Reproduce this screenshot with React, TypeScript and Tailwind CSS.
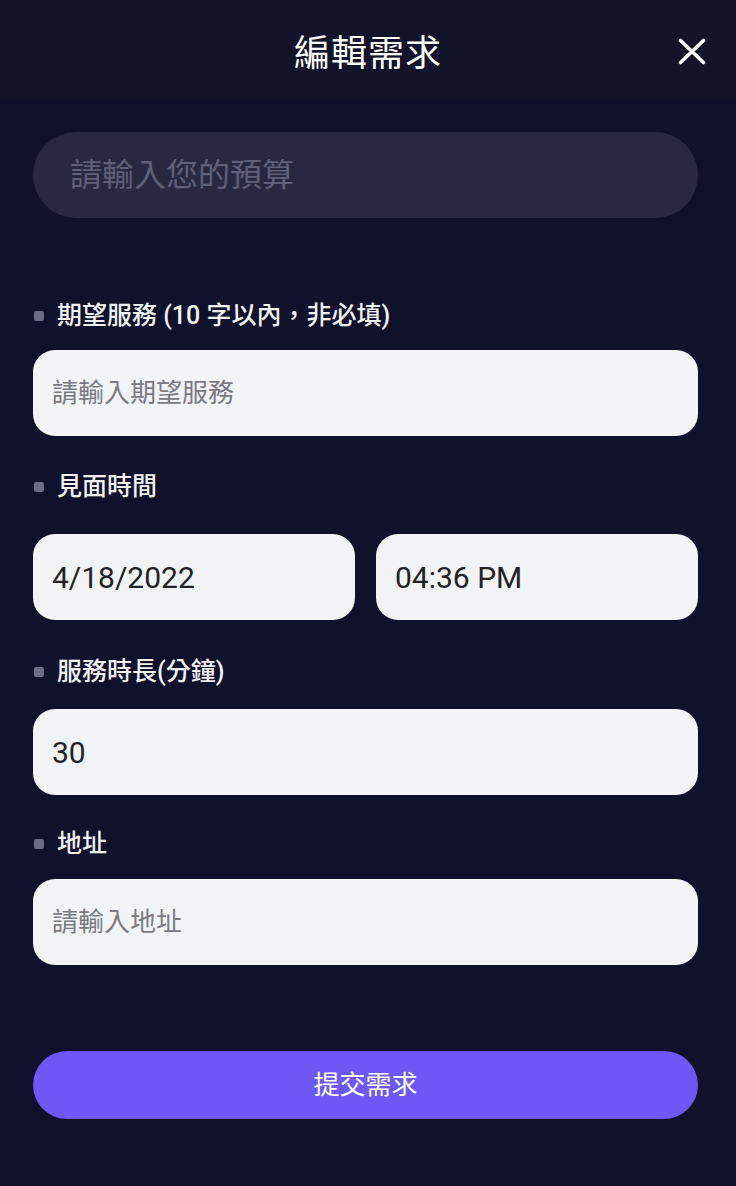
import React from "react";

const cjk = { fontFamily: 'Roboto, "Noto Sans CJK TC", sans-serif' };

function Label({ children, className = "" }: { children: React.ReactNode; className?: string }) {
  return (
    <div className={`flex items-center h-[34px] ${className}`}>
      <span className="w-[10px] h-[10px] rounded-[2px] bg-[#6b6d85] mr-[13px] ml-[1px]" />
      <span className="text-[25px] font-medium text-[#f1f1f4] leading-[34px]">{children}</span>
    </div>
  );
}

function Field({ text, placeholder = false, className = "" }: { text: string; placeholder?: boolean; className?: string }) {
  return (
    <div
      className={`h-[86px] rounded-[22px] bg-[#f2f3f5] flex items-center px-[19px] ${
        placeholder ? "text-[26px] text-[#7a7a80]" : "text-[30px] text-[#222226]"
      } ${className}`}
    >
      {text}
    </div>
  );
}

export default function App() {
  return (
    <div className="w-[736px] h-[1186px] bg-[#10112a] flex flex-col" style={cjk}>
      <div className="h-[100px] bg-[#131429] flex items-center justify-center relative pt-[8px]">
        <span className="text-[36px] text-white tracking-[1px]">編輯需求</span>
        <svg
          className="absolute left-[678px] top-[38px]"
          width="28"
          height="27"
          viewBox="0 0 28 27"
          fill="none"
          stroke="white"
          strokeWidth="3.6"
          strokeLinecap="round"
        >
          <path d="M2.5 2.5 L25.5 24.5 M25.5 2.5 L2.5 24.5" />
        </svg>
      </div>
      <div className="flex flex-col pl-[33px] pr-[38px] pt-[32px]">
        <div className="h-[86px] rounded-full bg-[#282840] flex items-center pl-[37px] text-[32px] text-[#5e607a]">
          請輸入您的預算
        </div>

        <Label className="mt-[81px]">期望服務 (10 字以內，非必填)</Label>
        <Field className="mt-[17px]" text="請輸入期望服務" placeholder />

        <Label className="mt-[34px]">見面時間</Label>
        <div className="grid grid-cols-2 gap-[21px] mt-[30px]">
          <Field text="4/18/2022" />
          <Field text="04:36 PM" />
        </div>

        <Label className="mt-[35px]">服務時長(分鐘)</Label>
        <Field className="mt-[20px]" text="30" />

        <Label className="mt-[32px]">地址</Label>
        <Field className="mt-[18px]" text="請輸入地址" placeholder />

        <button className="mt-[86px] h-[68px] rounded-full bg-[#6e58f5] text-white text-[26px] flex items-center justify-center">
          提交需求
        </button>
      </div>
    </div>
  );
}
